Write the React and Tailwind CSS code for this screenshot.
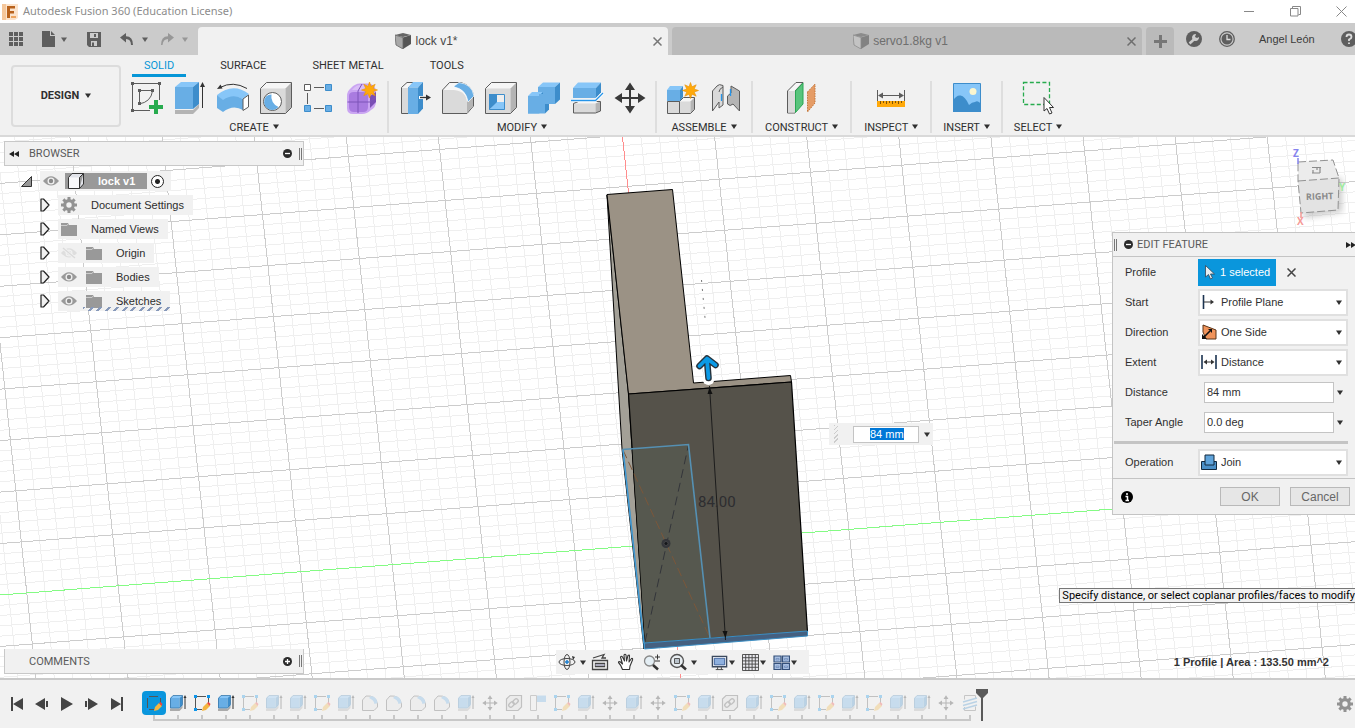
import React, { useEffect, useRef } from "react";

const INK = "#5c5c5c";
const B1 = "#87c6f8";
const B2 = "#68aee5";
const B3 = "#3d8dcb";
const G1 = "#f6f6f6";
const G2 = "#dadada";
const G3 = "#b4b4b4";

function Caret({ className = "" }) {
  return (
    <svg width="6" height="5" viewBox="0 0 6 5" className={"shrink-0 " + className} aria-hidden="true">
      <path d="M0 .5H6L3 5Z" fill="currentColor" />
    </svg>
  );
}

function Pic({ children, size = 32, box = 32, className = "" }) {
  return (
    <svg width={size} height={size} viewBox={`0 0 ${box} ${box}`} fill="none" className={"shrink-0 " + className} aria-hidden="true">
      {children}
    </svg>
  );
}

/* Oblique box: x,y is the front face's top left corner, d the depth. */
function Box({ x, y, w, h, dx, dy, c = [B1, B2, B3], stroke = "none" }) {
  return (
    <g stroke={stroke} strokeLinejoin="round">
      <path d={`M${x} ${y}l${dx} ${-dy}h${w}l${-dx} ${dy}Z`} fill={c[0]} />
      <path d={`M${x} ${y}h${w}v${h}h${-w}Z`} fill={c[1]} />
      <path d={`M${x + w} ${y}l${dx} ${-dy}v${h}l${-dx} ${dy}Z`} fill={c[2]} />
    </g>
  );
}

function Shell({ x, y, w, h, dx, dy }) {
  return (
    <g>
      <Box x={x} y={y} w={w} h={h} dx={dx} dy={dy} c={[G1, G2, G3]} />
      <path d={`M${x} ${y}l${dx} ${-dy}h${w}v${h}l${-dx} ${dy}h${-w}Z`} stroke={INK} strokeLinejoin="round" />
    </g>
  );
}

function Star({ x, y }) {
  const pts = [];
  for (let i = 0; i < 16; i++) {
    const r = i % 2 ? 4 : 8;
    const a = (Math.PI * i) / 8 - Math.PI / 2;
    pts.push(`${(x + r * Math.cos(a)).toFixed(1)},${(y + r * Math.sin(a)).toFixed(1)}`);
  }
  return <polygon points={pts.join(" ")} fill="#ffa90a" stroke="#e8920a" strokeWidth=".6" />;
}

const Move = ({ c = "#3a3a3a" }) => (
  <g fill={c}>
    <path d="M15 7h2v8h8v2h-8v8h-2v-8H7v-2h8Z" />
    <path d="M16 .5l5 7.5H11ZM16 31.5l5-7.5H11ZM.5 16L8 11v10ZM31.5 16L24 11v10Z" />
  </g>
);

const icons = {
  sketch: (
    <>
      <path d="M2.500 1.500H28M1.500 2V28M2 28.500H19M28.500 2V18" stroke={INK} />
      <path d="M8.500 8.500H21M8.500 8.500V22M21.500 9Q20 20 8 22" stroke={INK} />
      <path d="M0 0h3v3h-3ZM27 0h3v3h-3ZM0 27h3v3h-3ZM7 7h3v3h-3ZM20 7h3v3h-3ZM7 20h3v3h-3Z" fill={INK} />
      <path d="M23 18h4v5h5v4h-5v5h-4v-5h-5v-4h5Z" fill="#27ab4e" />
    </>
  ),
  extrude: (
    <>
      <path d="M1 28H19L25 22V26L19 32H1Z" fill="#b4b4b4" />
      <Box x={1} y={5} w={18} h={22} dx={6} dy={5} />
      <path d="M28.500 4V26" stroke="#333" />
      <path d="M28.500 0l2.500 5h-5Z" fill="#333" />
    </>
  ),
  revolve: (
    <>
      <path d="M0 13Q16 0 32 12L26 17Q16 12 6 19Z" fill={B1} />
      <path d="M0 13L6 18Q16 11 26 17V28Q16 22 6 30L0 26Z" fill={B2} />
      <path d="M26 17L31.500 13V25L26 28.500Z" fill="#fff" stroke={INK} />
      <path d="M3 5.500Q16-1.500 30 6.500" stroke="#333" />
      <path d="M0 7l3.500-4.500 2 4Z" fill="#333" />
    </>
  ),
  hole: (
    <>
      <Shell x={0.5} y={6.5} w={25} h={25} dx={6} dy={6} />
      <circle cx="12.500" cy="19.500" r="9" fill="#fff" stroke={INK} />
      <path d="M6 14.500a8 8 0 0 0 12.500 10.500a11 11 0 0 1-7-12.500a8 8 0 0 0-5.500 2Z" fill={B2} />
    </>
  ),
  pattern: (
    <>
      <path d="M11 5.500H21M4.500 11V22M11 26.500H21" stroke={INK} />
      <path d="M1.500 2.500h6v6h-6Z" fill="#fff" stroke={INK} />
      <g fill={B2} stroke={B3}>
        <path d="M22.500 2.500h6v6h-6ZM1.500 23.500h6v6h-6ZM22.500 23.500h6v6h-6Z" />
      </g>
    </>
  ),
  form: (
    <>
      <path d="M1 14Q1 9 5 6Q9 1.500 14 1.500H22Q30 2 30 10V20Q30 25 25 28Q21 32 16 32H7Q1 32 1 26Z" fill="#caa5f2" />
      <path d="M3 14Q3 10 8 10H17Q22 10 22 15V25Q22 30 17 30H8Q3 30 3 25Z" fill="#a97be0" />
      <path d="M6 8Q10 3 14 3H23L19 8Z" fill="#d9bdf7" />
      <path d="M24 14L30 10V20L24 26Z" fill="#7a4fb5" />
      <path d="M1.500 20H24M12 9V31M24 20L30 15M12 9L16 2" stroke="#7d55b8" />
      <Star x={23.5} y={8} />
    </>
  ),
  press: (
    <>
      <path d="M2.500 5.500L8 .5H15L9.500 5.500V31.500H2.500Z" fill={G1} stroke={INK} />
      <path d="M3 6h6v25h-6Z" fill={G2} />
      <Box x={9} y={5.500} w={10} h={26.500} dx={5} dy={5.500} />
      <path d="M20 15.500H28" stroke="#fff" strokeWidth="3" />
      <path d="M21 15.500H29" stroke="#333" strokeWidth="1.400" />
      <path d="M32 15.500l-5-3v6Z" fill="#333" />
    </>
  ),
  fillet: (
    <>
      <path d="M.5 8L7.500 .5H19Q31 4 31.500 15V24L25 31.500H.5Z" fill={G1} stroke={INK} />
      <path d="M1 8H12Q24 9 25 20V31H1Z" fill={G2} />
      <path d="M25 19L31 14.500V24L25 31Z" fill={G3} />
      <path d="M12 4L17 .5Q30 2 32 14L26 20Q24 7 12 5Z" fill={B2} stroke="#fff" strokeWidth=".7" />
    </>
  ),
  shell: (
    <>
      <Shell x={0.5} y={6.5} w={25} h={25} dx={6} dy={6} />
      <path d="M4 12h16v16h-16Z" fill="#eee" />
      <path d="M4 12h8v9l-8 7Z" fill={B3} />
      <path d="M4 28L12 20H20V28Z" fill={B1} />
      <path d="M4.500 12.500h15v15h-15Z" stroke={B3} />
    </>
  ),
  combine: (
    <>
      <Box x={10} y={5} w={17} h={17} dx={5} dy={4.500} />
      <Box x={0} y={14} w={11} h={17.500} dx={4} dy={4} />
      <path d="M0 14H11V12H17V31.500H0Z" fill={B2} />
      <path d="M17 22h4v5.500l-4 4Z" fill={B3} />
    </>
  ),
  split: (
    <>
      <Shell x={2.5} y={21.5} w={22} h={9.500} dx={5} dy={2} />
      <Box x={2} y={6} w={23} h={10} dx={5} dy={5.500} />
      <path d="M0 18.500H24.500L32 11" stroke="#fff" strokeWidth="3" />
      <path d="M0 18.500H24.500L32 11" stroke="#2694e8" strokeWidth="1.300" />
    </>
  ),
  move: <Move />,
  component: (
    <>
      <Shell x={12.5} y={19.5} w={11} h={12} dx={4} dy={4} />
      <path d="M.5 19.500h12v12h-12Z" fill={G2} stroke={INK} />
      <Box x={0} y={8} w={13} h={11} dx={3} dy={4} />
      <Star x={23.5} y={8.5} />
    </>
  ),
  joint: (
    <>
      <path d="M2.500 9L7 4Q9 1.500 13 3.500V23L9 26V20L2.500 29Z" fill={G2} stroke={INK} />
      <path d="M9 10Q9 7 13 5" stroke={INK} />
      <path d="M29.500 9L21 4V11L17.500 14V22Q20 25 23 22L29.500 29Z" fill={G3} stroke={INK} />
      <path d="M11.500 12V19M20.500 7V14" stroke="#2694e8" strokeWidth="1.300" />
    </>
  ),
  construct: (
    <>
      <path d="M1.500 9L10 .5H17L9 9V31H1.500Z" fill={G1} stroke={INK} />
      <path d="M2 9h7v21.500h-7Z" fill={G2} />
      <path d="M9.500 9L17 1V22L9.500 30.500Z" fill="#58c47c" stroke="#2aa653" />
      <path d="M21.500 10L29 2V21L21.500 30Z" fill="#e59c66" stroke="#c4763a" strokeDasharray="1.500 1" />
    </>
  ),
  inspect: (
    <>
      <path d="M2.500 8V19M29.500 8V19M5 13.500H27" stroke={INK} />
      <path d="M3 13.500l5-3v6ZM29 13.500l-5-3v6Z" fill={INK} />
      <path d="M2 19h28v6h-28Z" fill="#ffa90a" />
      <path d="M5.500 19v3M8.500 19v2M11.500 19v3M14.500 19v2M17.500 19v3M20.500 19v2M23.500 19v3M26.500 19v2" stroke="#7d5307" />
    </>
  ),
  insert: (
    <>
      <path d="M2.500 1.500h27v28h-27Z" fill={B1} stroke={B3} />
      <circle cx="22" cy="9.500" r="3.500" fill="#fbf6cf" />
      <path d="M2 19Q5 13 9.500 13.500Q14 14 18 23Q21 20 24 20Q27 18 30 22V30H2Z" fill={B3} />
    </>
  ),
  select: (
    <>
      <path d="M1.500 .5h26v22h-26Z" stroke="#27ab4e" strokeWidth="1.300" strokeDasharray="4 2.300" />
      <path d="M22 15.500V29L25 26.500L27.500 32L30 31L27.500 25.500H31.500Z" fill="#fff" stroke="#333" />
    </>
  ),
};

const groups = [
  { name: "CREATE", pad: "px-1", items: ["sketch", "extrude", "revolve", "hole", "pattern", "form"] },
  { name: "MODIFY", pad: "px-1", items: ["press", "fillet", "shell", "combine", "split", "move"] },
  { name: "ASSEMBLE", pad: "px-1", items: ["component", "joint"] },
  { name: "CONSTRUCT", pad: "px-3", items: ["construct"] },
  { name: "INSPECT", pad: "px-3", items: ["inspect"] },
  { name: "INSERT", pad: "px-[11px]", items: ["insert"] },
  { name: "SELECT", pad: "px-[11px]", items: ["select"] },
];

function TitleBar() {
  return (
    <header className="flex h-[23px] shrink-0 items-center bg-white">
      <svg width="16" height="16" viewBox="0 0 16 16" className="ml-0.5" aria-hidden="true">
        <path d="M0 0h16v14l-3 2H0Z" fill="#fbe3cc" />
        <path d="M0 0h4v16H0Z" fill="#f5c79b" />
        <path d="M5 2h8v2.500H8V7h4v2.500H8V14H5Z" fill="#b8611b" />
        <path d="M9 12h5v2H9Z" fill="#eda45f" />
      </svg>
      <h1 className="ml-[5px] font-['Noto_Sans',sans-serif] text-[11px] text-[#8c8c8c]">Autodesk Fusion 360 (Education License)</h1>
      <div className="ml-auto flex items-center gap-[35px] pr-2 text-[#888]">
        <button aria-label="Minimize"><svg width="11" height="11" viewBox="0 0 11 11" className="block" stroke="currentColor"><path d="M0 5.500H10" /></svg></button>
        <button aria-label="Restore"><svg width="11" height="11" viewBox="0 0 11 11" className="block" fill="none" stroke="currentColor"><path d="M.5 2.500h7.500v7.500h-7.500ZM2.500 2.500V.5h8v8h-2" /></svg></button>
        <button aria-label="Close"><svg width="11" height="11" viewBox="0 0 11 11" className="block" stroke="currentColor"><path d="M.5.5l10 10M10.500.5l-10 10" /></svg></button>
      </div>
    </header>
  );
}

function DocCube({ dim }) {
  return (
    <svg width="16" height="16" viewBox="0 0 16 16" aria-hidden="true" opacity={dim ? 0.55 : 1}>
      <path d="M0 2L8 0L16 2L8 4Z" fill="#666" />
      <path d="M0 2L8 4.500V16L1 12Z" fill={dim ? "#ccc" : "#a8a8a8"} />
      <path d="M8 4.500L16 2V11L8 16Z" fill="#555" />
      <path d="M0 2L8 4.500V16L1 12Z" stroke="#666" strokeWidth=".8" fill="none" />
    </svg>
  );
}

function Cross({ className }) {
  return <svg width="9" height="9" viewBox="0 0 9 9" className={className} stroke="currentColor" strokeWidth="1.500"><path d="M.5.5l8 8M8.500.5l-8 8" /></svg>;
}

function TabBar() {
  return (
    <div className="flex h-8 shrink-0 overflow-hidden bg-[#cbcbcb] text-[#5e5e5e]">
      <div className="flex w-[198px] shrink-0 items-center pl-[9px]">
        <button aria-label="Data panel">
          <svg width="14" height="14" viewBox="0 0 14 14" className="block" fill="currentColor"><path d="M0 0h4v4H0ZM5 0h4v4H5ZM10 0h4v4h-4ZM0 5h4v4H0ZM5 5h4v4H5ZM10 5h4v4h-4ZM0 10h4v4H0ZM5 10h4v4H5ZM10 10h4v4h-4Z" /></svg>
        </button>
        <button aria-label="File" className="ml-[19px] flex items-center gap-[6px]">
          <svg width="13" height="16" viewBox="0 0 13 16" fill="currentColor"><path d="M0 0h8v5h5v11H0ZM9 0l4 4H9Z" /></svg>
          <Caret />
        </button>
        <button aria-label="Save" className="ml-5">
          <svg width="14" height="15" viewBox="0 0 14 15" className="block" fill="currentColor" fillRule="evenodd"><path d="M0 0h14v15H2L0 13ZM3 1v5h8V1ZM4 9v5h6V9ZM7 2h2v3H7ZM5 10.500h2V14H5Z" /></svg>
        </button>
        <button aria-label="Undo" className="ml-[19px] flex items-center gap-2">
          <svg width="14" height="12" viewBox="0 0 14 12" fill="currentColor"><path d="M0 4.500L6 0v3.300Q13 3.500 13 12h-2Q11 6 6 6v3.500Z" /></svg>
          <Caret />
        </button>
        <button aria-label="Redo" className="ml-3 flex items-center gap-2 text-[#979797]">
          <svg width="14" height="12" viewBox="0 0 14 12" fill="currentColor"><path d="M14 4.500L8 0v3.300Q1 3.500 1 12h1.500Q3 6 8 6v3.500Z" /></svg>
          <Caret />
        </button>
      </div>
      <div className="flex flex-1 gap-1 pt-1 text-[12px]">
        <div className="flex flex-1 items-center rounded-t bg-[#f1f1f1] pl-[2px] pr-[6px] text-[#4a4a4a]">
          <a href="#lock" className="flex flex-1 items-center justify-center gap-1"><DocCube />lock v1*</a>
          <button aria-label="Close lock v1" className="text-[#777]"><Cross className="block" /></button>
        </div>
        <div className="flex flex-1 items-center rounded-t bg-[#bababa] pl-[2px] pr-[6px] text-[#6e6e6e]">
          <a href="#servo" className="flex flex-1 items-center justify-center gap-1"><DocCube dim />servo1.8kg v1</a>
          <button aria-label="Close servo1.8kg v1"><Cross className="block" /></button>
        </div>
        <button aria-label="New tab" className="flex w-7 items-center justify-center rounded-t bg-[#bababa]">
          <svg width="13" height="13" viewBox="0 0 13 13" fill="#777"><path d="M5 0h3v5h5v3H8v5H5V8H0V5h5Z" /></svg>
        </button>
      </div>
      <div className="flex w-[181px] shrink-0 items-center pl-3 text-[11px] text-[#3c3c3c]">
        <button aria-label="Extensions">
          <svg width="16" height="16" viewBox="0 0 16 16" className="block"><circle cx="8" cy="8" r="8" fill="#5e5e5e" /><path d="M3.500 12.500L9 7.500" stroke="#ccc" strokeWidth="2.500" /><path d="M13 6A3.500 3.500 0 1 1 10 3L9 6L11 7Z" fill="#ccc" /></svg>
        </button>
        <button aria-label="Job status" className="ml-[17px]">
          <svg width="16" height="16" viewBox="0 0 16 16" className="block" fill="none"><circle cx="8" cy="8" r="7.300" stroke="#5e5e5e" strokeWidth="1.300" /><circle cx="8" cy="8" r="5.500" fill="#5e5e5e" /><path d="M8 4v4.500h3.500" stroke="#ddd" strokeWidth="1.300" /></svg>
        </button>
        <button className="ml-6 whitespace-nowrap">Angel León</button>
        <button aria-label="Help" className="ml-[26px]">
          <svg width="16" height="16" viewBox="0 0 16 16" className="block"><circle cx="8" cy="8" r="8" fill="#5e5e5e" /><path d="M5.500 6Q5.500 3.500 8 3.500T10.500 6Q10.500 7.500 8 8.500V10M8 11.500V13" fill="none" stroke="#ddd" strokeWidth="1.800" /></svg>
        </button>
      </div>
    </div>
  );
}

function Ribbon() {
  return (
    <div className="flex h-[82px] shrink-0 overflow-hidden border-b-2 border-[#d9d9d9] bg-[#f1f1f1] font-[Roboto,sans-serif] text-[11px] text-[#2f2f2f]">
      <button className="ml-[11px] mt-[10px] flex h-[62px] w-[110px] shrink-0 items-center justify-center gap-[6px] rounded border-2 border-[#dcdcdc] pt-px font-bold">
        DESIGN <Caret className="mb-0.5" />
      </button>
      <div className="flex flex-col">
        <nav className="ml-[11px] flex gap-[22px]">
          <a href="#solid" className="flex h-[22px] items-center border-b-[3px] border-[#0696d7] px-3 pt-1 text-[#0696d7]">SOLID</a>
          {["SURFACE", "SHEET METAL", "TOOLS"].map((t) => (
            <a key={t} href={"#" + t.toLowerCase().replace(" ", "-")} className="flex h-[22px] items-center border-b-[3px] border-transparent px-3 pt-1">{t}</a>
          ))}
        </nav>
        <div className="mt-1 flex h-[52px]">
          {groups.map((g, i) => (
            <section key={g.name} className={"flex flex-col items-center border-r-2 " + g.pad + (i === groups.length - 1 ? " border-transparent" : " border-[#dedede]")}>
              <div className="flex">
                {g.items.map((n) => (
                  <button key={n} aria-label={n} className="flex h-[35px] w-[43px] justify-center pt-px"><Pic className="overflow-visible">{icons[n]}</Pic></button>
                ))}
              </div>
              <button className="mt-1 flex items-center gap-1 whitespace-nowrap leading-[16px]">{g.name} <Caret className="mb-1" /></button>
            </section>
          ))}
        </div>
      </div>
    </div>
  );
}

function Scene() {
  const v = [];
  const h = [];
  for (let k = -50; k <= 140; k++) {
    const x = 622.4 + 18.42 * k;
    v.push({ k, x1: x - 0.1075 * 136, x2: x + 0.1075 * 1264 });
  }
  for (let k = -60; k <= 100; k++) {
    const y = 595 + 10.29 * k;
    h.push({ k, y1: y, y2: y - 0.0773 * 2600 });
  }
  const line = (l, major) => (l.k % 5 === 0) === major;
  return (
    <svg width="100%" height="100%" className="absolute inset-0 block" aria-label="Model view" role="img">
      <g transform="translate(0,-137)">
        {[false, true].map((major) => (
          <g key={String(major)} stroke={major ? "#cccccc" : "#efefef"} shapeRendering="crispEdges">
            {v.filter((l) => line(l, major)).map((l) => <line key={"v" + l.k} x1={l.x1} y1="0" x2={l.x2} y2="1400" />)}
            {h.filter((l) => line(l, major)).map((l) => <line key={"h" + l.k} x1="0" y1={l.y1} x2="2600" y2={l.y2} />)}
          </g>
        ))}
        <path d="M622.400 136L680.500 678" stroke="#ff8d8d" shapeRendering="crispEdges" />
        <path d="M0 595L2600 394" stroke="#84fb84" shapeRendering="crispEdges" />

        <path d="M607 195L628.500 394L645 643L644 649L622 449Z" fill="#a3a097" stroke="#000" strokeLinejoin="round" />
        <path d="M607 194.500L672.500 189.500L693.500 383L790.500 375.500L791.500 382L628.500 394Z" fill="#9b9285" stroke="#000" strokeLinejoin="round" />
        <path d="M628.500 394L791.500 382L807.500 632L645 643Z" fill="#55524a" stroke="#000" strokeWidth="1.200" strokeLinejoin="round" />
        <path d="M632.500 450L688.500 445L710 638L645 643Z" fill="#56584f" />
        <path d="M644.500 643L807.500 631V636L644.500 649Z" fill="#456080" stroke="#3c8fc4" />
        <path d="M645 642L688.500 445" stroke="#33353a" strokeDasharray="9 5" />
        <path d="M623 450L710 638" stroke="#7b573a" strokeDasharray="9 4" />
        <path d="M644 643L623 449.500L688.500 444.500L710 638" fill="none" stroke="#5590b3" strokeWidth="1.600" />
        <path d="M623 450L644.500 649" stroke="#3f9ad6" strokeWidth="1.200" />
        <circle cx="666" cy="543.500" r="4.500" fill="#34353a" />
        <circle cx="666" cy="543.500" r="2" fill="#15161a" stroke="#555" strokeWidth=".6" />
        <path d="M709.500 386L725.500 640" stroke="#1c1c1c" />
        <path d="M709.500 387l3 7h-5ZM725.500 638l2-7h-5Z" fill="#111" />
        <text x="698" y="507" fontFamily="Roboto, sans-serif" fontSize="15" fill="#2d2d30">84.00</text>
        <path d="M701.500 280L705 318" stroke="#555" strokeWidth=".8" strokeDasharray="2 7" />
        <circle cx="708.500" cy="379" r="6" fill="#fff" />
        <g fill="none" strokeLinecap="round" strokeLinejoin="round">
          <path d="M699.500 366L707 358.500L715.500 365M707 360L708.500 378" stroke="#26323c" strokeWidth="6.600" />
          <path d="M699.500 366L707 358.500L715.500 365M707 360L708.500 378" stroke="#0b9ae6" strokeWidth="3.800" />
        </g>
      </g>
    </svg>
  );
}

const Eye = ({ off }) => (
  <svg width="16" height="16" viewBox="0 0 16 16" className="shrink-0" aria-hidden="true" fill="none">
    <path d="M0 8Q8-1.500 16 8Q8 17 0 8Z" fill={off ? "#dedede" : "#9a9a9a"} />
    <circle cx="8" cy="8" r="3.500" fill="#f1f1f1" />
    <circle cx="8" cy="8" r="2.200" fill={off ? "#dedede" : "#8a8a8a"} />
    {off && <path d="M2 3L14 13" stroke="#f1f1f1" strokeWidth="3" />}
    {off && <path d="M2 3L14 13" stroke="#dadada" strokeWidth="1.300" />}
  </svg>
);

const Folder = () => (
  <svg width="16" height="14" viewBox="0 0 16 14" className="shrink-0" aria-hidden="true"><path d="M0 1h7l1 2h8v11H0Z" fill="#999" /><path d="M0 3.500h6l1-1.500" stroke="#ccc" fill="none" /></svg>
);

function Gear({ size = 16 }) {
  return (
    <svg width={size} height={size} viewBox="0 0 16 16" className="shrink-0" aria-hidden="true">
      <circle cx="8" cy="8" r="4.300" fill="none" stroke="#929292" strokeWidth="3.200" />
      {[0, 45, 90, 135].map((a) => (
        <path key={a} d="M8 0v3M8 13v3" stroke="#929292" strokeWidth="3" transform={`rotate(${a} 8 8)`} />
      ))}
    </svg>
  );
}

const Grip = () => <span className="ml-1 h-3 w-[3px] border-x border-[#777]" />;

const RoundSign = ({ plus }) => (
  <svg width="9" height="9" viewBox="0 0 9 9" className="block"><circle cx="4.500" cy="4.500" r="4.500" fill="#2b2b2b" /><path d={plus ? "M2 4.500h5M4.500 2v5" : "M2 4.500h5"} stroke="#fff" strokeWidth="1.300" /></svg>
);

const tree = [
  { name: "Document Settings", gear: true },
  { name: "Named Views", folder: true },
  { name: "Origin", eye: "off", folder: true },
  { name: "Bodies", eye: "on", folder: true },
  { name: "Sketches", eye: "on", folder: true, hatch: true },
];

function Browser() {
  return (
    <aside className="absolute left-1 top-1 w-[300px] text-[11px] text-[#2d2d2d]">
      <div className="flex h-[25px] items-center border border-[#c8c8c8] bg-[#f1f1f1] pl-1 pr-px font-[Roboto,sans-serif] text-[#5a5a5a]">
        <button aria-label="Collapse browser"><svg width="10" height="6" viewBox="0 0 10 6" className="block" fill="#222"><path d="M5 0v6L0 3ZM10 0v6L5 3Z" /></svg></button>
        <h2 className="ml-[10px] flex-1 pt-0.5">BROWSER</h2>
        <button aria-label="Hide all" className="mr-[3px]"><RoundSign /></button>
        <Grip />
      </div>
      <ul>
        <li className="mt-[5px] flex h-5 items-center pl-[17px]">
          <svg width="11" height="11" viewBox="0 0 11 11" className="mr-2" aria-hidden="true"><path d="M.5 10.500H10.500V.5Z" fill="#999" stroke="#333" /></svg>
          <div className="flex h-5 items-center bg-[#f1f1f1] pl-[3px] pr-[7px]">
            <Eye />
            <span className="ml-[6px] flex h-4 items-center bg-[#999] pl-[3px] pr-3 font-bold text-white">
              <svg width="16" height="16" viewBox="0 0 16 16" className="mr-[14px]" aria-hidden="true"><path d="M.5 4.500L4 .5H15.500L11.500 4.500V15.500H.5ZM15.500 .5V11L11.500 15.500" fill="#e2e4ea" stroke="#333" strokeLinejoin="round" /><path d="M1 4.500h10v10.500h-10Z" fill="#f8f8fa" /></svg>
              lock v1
            </span>
            <input type="radio" name="active" defaultChecked aria-label="Activate lock v1" className="ml-1 h-[13px] w-[13px] appearance-none rounded-full border border-[#222] bg-[radial-gradient(circle,#222_0_2px,#fff_3px)]" />
          </div>
        </li>
        {tree.map((r) => (
          <li key={r.name} className="mt-1 flex h-5 items-center pl-9">
            <button aria-label={"Expand " + r.name} className="mr-2"><svg width="10" height="14" viewBox="0 0 10 14" className="block"><path d="M1 1L3.500 1L9 7L3.500 13H1Z" fill="#f1f1f1" stroke="#222" strokeWidth="1.200" strokeLinejoin="round" /></svg></button>
            <div className="relative flex h-5 items-center gap-[9px] bg-[#f1f1f1] pl-[3px] pr-[9px]">
              {r.eye && <Eye off={r.eye === "off"} />}
              {r.gear && <Gear />}
              {r.folder && <Folder />}
              <span className="pl-[5px]">{r.name}</span>
              {r.hatch && <span className="absolute bottom-0 left-[25px] right-0 h-1 bg-[repeating-linear-gradient(135deg,#8799ba_0_2px,transparent_2px_6px)]" />}
            </div>
          </li>
        ))}
      </ul>
    </aside>
  );
}

function Comments() {
  return (
    <div className="absolute bottom-1 left-1 flex h-[25px] w-[300px] items-center border border-t-0 border-[#c8c8c8] bg-[#f1f1f1] pl-6 pr-px font-[Roboto,sans-serif] text-[11px] text-[#5a5a5a]">
      <h2 className="flex-1 pt-0.5">COMMENTS</h2>
      <button aria-label="Add comment" className="mr-[3px]"><RoundSign plus /></button>
      <Grip />
    </div>
  );
}

function ViewCube() {
  return (
    <svg width="60" height="84" viewBox="1288 144 60 84" className="absolute right-[7px] top-[7px]" role="img" aria-label="View cube">
      <defs><filter id="soft"><feGaussianBlur stdDeviation="3" /></filter></defs>
      <path d="M1304 180L1342 178V212L1304 218Z" fill="#999" opacity=".5" filter="url(#soft)" />
      <path d="M1298 162L1333 160L1339 178L1298 181Z" fill="#ececec" />
      <path d="M1298 181L1339 178L1338 210L1301 213Z" fill="#e3e3e3" />
      <path d="M1298 162L1333 160L1339 178L1338 210L1301 213L1298 181ZM1298 181L1339 178" fill="none" stroke="#929292" strokeDasharray="8 3" />
      <g fontFamily="'Open Sans', sans-serif" fontWeight="bold">
        <text x="1306" y="200" fontSize="9" fill="#8a8a8a" transform="rotate(-2 1306 200)">RIGHT</text>
        <text x="1293" y="157" fontSize="10" fill="#8583ee">Z</text>
        <text x="1339" y="191" fontSize="10" fill="#a0eba0">Y</text>
        <text x="1297" y="225" fontSize="10" fill="#f59a96">X</text>
      </g>
      <path d="M1298 158V164" stroke="#8583ee" strokeWidth="1.500" />
      <path d="M1301 212V218" stroke="#f59a96" strokeWidth="1.500" />
      <path d="M1312 167.500h9M1320 167v6M1312 173h8M1313 170v3M1317 168v2" stroke="#8a8a8a" fill="none" strokeWidth="1.200" />
    </svg>
  );
}

function FloatingValue() {
  const ref = useRef(null);
  useEffect(() => {
    ref.current.focus({ preventScroll: true });
    ref.current.select();
  }, []);
  return (
    <div className="absolute left-[829px] top-[286px] flex h-[22px] items-center bg-[#f1f1f1] pl-[5px] pr-[3px]">
      <span className="mr-[15px] h-[18px] w-1 bg-[repeating-linear-gradient(135deg,#ccc_0_1px,transparent_1px_3px)]" />
      <input ref={ref} aria-label="Distance value" defaultValue="84 mm" className="h-[17px] w-[66px] border border-[#c4c4c4] bg-white pl-4 text-[11px] outline-none selection:bg-[#0078d7] selection:text-white" />
      <button aria-label="Distance options" className="ml-[5px] text-[#333]"><Caret /></button>
    </div>
  );
}

const fieldIcons = {
  start: <><path d="M2.500 1V15" stroke="#1b3350" strokeWidth="1.600" /><path d="M3 8H11" stroke="#333" /><path d="M13 8L9.500 5.500v5Z" fill="#333" /></>,
  direction: <><path d="M2 1L15 6V15H5L2 8Z" fill="#f0935a" stroke="#5a3418" /><path d="M2 14L9 7" stroke="#111" strokeWidth="1.600" /><path d="M1 15v-5l5 5ZM11 5v4l-4-4Z" fill="#111" /></>,
  extent: <><path d="M1 1V15M15 1V15" stroke="#1b3350" strokeWidth="1.600" /><path d="M4 8H12" stroke="#333" /><path d="M2.500 8l3.500-2.500v5ZM13.500 8l-3.500-2.500v5Z" fill="#333" /></>,
  join: <><path d="M.5 7.500h15v8H.5Z" fill="#4a8fc7" stroke="#13293d" /><path d="M4 1h9v10H4Z" fill="#5fa3da" stroke="#13293d" /></>,
};

function Pick({ label, id, icon, value, others }) {
  return (
    <div className="flex h-[30px] items-center">
      <label htmlFor={id} className="w-[73px]">{label}</label>
      <div className="flex h-[27px] w-[150px] items-center border-2 border-[#e0e0e0] bg-white pl-px pr-1">
        <Pic size={16} box={16}>{fieldIcons[icon]}</Pic>
        <select id={id} defaultValue={value} className="h-full min-w-0 flex-1 appearance-none bg-transparent pl-1 outline-none">
          {[value, ...others].map((o) => <option key={o}>{o}</option>)}
        </select>
        <Caret className="pointer-events-none" />
      </div>
    </div>
  );
}

function Num({ label, id, value }) {
  return (
    <div className="flex h-[30px] items-center">
      <label htmlFor={id} className="w-[79px]">{label}</label>
      <input id={id} defaultValue={value} className="h-[21px] w-[130px] border border-[#c4c4c4] bg-white px-[2px] outline-none" />
      <button aria-label={label + " options"} className="ml-[3px]"><Caret /></button>
    </div>
  );
}

function EditFeature() {
  return (
    <form className="absolute right-0 top-[95px] w-[243px] border-y border-l border-[#c4c4c4] bg-[#f1f1f1] text-[11px] text-[#303030]" onSubmit={(e) => e.preventDefault()}>
      <div className="flex h-[24px] items-center border-b border-[#c4c4c4] font-[Roboto,sans-serif] text-[#5a5a5a]">
        <span className="ml-px h-3 w-[3px] border-x border-[#777]" />
        <button type="button" aria-label="Collapse" className="ml-[7px]"><RoundSign /></button>
        <h2 className="ml-1 flex-1 pt-0.5">EDIT FEATURE</h2>
        <button type="button" aria-label="Expand"><svg width="9" height="6" viewBox="0 0 9 6" className="block" fill="#222"><path d="M0 0v6L5 3ZM5 0v6L10 3Z" /></svg></button>
      </div>
      <div className="pl-3">
        <div className="flex h-[30px] items-center">
          <span className="w-[73px]">Profile</span>
          <button type="button" className="flex h-[27px] w-[78px] items-center gap-[5px] bg-[#0a96dc] pl-[7px] text-white">
            <svg width="10" height="15" viewBox="0 0 10 15"><path d="M.5.5V12L3.500 9.500L5.500 14L7.500 13L5.500 9H9.500Z" fill="#e9eef2" stroke="#345" strokeWidth=".8" /></svg>
            <span>1 selected</span>
          </button>
          <button type="button" aria-label="Clear selection" className="ml-[11px] text-[#444]"><Cross className="block" /></button>
        </div>
        <Pick label="Start" id="start" icon="start" value="Profile Plane" others={["Offset Plane", "Object"]} />
        <Pick label="Direction" id="direction" icon="direction" value="One Side" others={["Two Sides", "Symmetric"]} />
        <Pick label="Extent" id="extent" icon="extent" value="Distance" others={["To Object", "All"]} />
        <Num label="Distance" id="distance" value="84 mm" />
        <Num label="Taper Angle" id="taper" value="0.0 deg" />
      </div>
      <hr className="ml-px mr-[7px] mt-1 border-t-[3px] border-[#c4c4c4]" />
      <div className="border-b border-[#c4c4c4] pb-px pl-3 pt-[3px]">
        <Pick label="Operation" id="operation" icon="join" value="Join" others={["Cut", "Intersect"]} />
      </div>
      <div className="flex h-[35px] items-center pl-2 text-[12px] text-[#666]">
        <button type="button" aria-label="Information"><svg width="12" height="12" viewBox="0 0 12 12" className="block"><circle cx="6" cy="6" r="6" fill="#000" /><path d="M6 2v2M4.500 5.500H6.500V9.500M4.500 9.500H8" stroke="#fff" strokeWidth="1.500" fill="none" /></svg></button>
        <button type="submit" className="ml-auto mr-[10px] h-[19px] w-[60px] border border-[#b9b9b9] bg-[#e6e6e6] leading-none">OK</button>
        <button type="button" className="mr-[5px] h-[19px] w-[60px] border border-[#b9b9b9] bg-[#e6e6e6] leading-none">Cancel</button>
      </div>
    </form>
  );
}

function NavBar() {
  return (
    <div className="absolute bottom-1 left-[556px] flex h-6 w-[253px] items-center bg-[#f1f1f1] pl-[2px] text-[#333]">
      <button aria-label="Orbit" className="flex items-center gap-1">
        <Pic size={18} box={18}><ellipse cx="9" cy="9" rx="8" ry="3.500" stroke="#444" /><ellipse cx="9" cy="9" rx="3" ry="7.500" stroke="#444" /><path d="M9 7v4M7 9h4" stroke="#1b7fd0" strokeWidth="1.500" /><path d="M14 3l1 4 2-3Z" fill="#333" /></Pic>
        <Caret />
      </button>
      <button aria-label="Look at" className="ml-[5px]">
        <Pic size={18} box={18}><path d="M1.500 7.500h15v9h-15ZM4.500 10.500h9v3h-9Z" stroke="#444" strokeWidth="1.300" /><path d="M4.500 11h9v2h-9Z" fill="#aab" /><path d="M2 5L13 1.500 11 5H15" stroke="#444" strokeWidth="1.300" /></Pic>
      </button>
      <button aria-label="Pan" className="ml-2">
        <Pic size={18} box={18}><path d="M5.500 16.500Q4 12 1.500 9.500Q1.500 8 3.500 9L5.500 11L3.500 4Q4.500 2.500 5.500 4L7.500 8L7 2Q8 .5 9 2L9.500 8L11 2.500Q12.500 1.500 12.500 3L12 9L14.500 5.500Q16 5 15.500 7L13 13L12.500 16.500Z" fill="#fff" stroke="#333" strokeWidth="1.100" strokeLinejoin="round" /></Pic>
      </button>
      <button aria-label="Zoom" className="ml-2">
        <Pic size={18} box={18}><circle cx="6.500" cy="8" r="5" fill="#e4eef4" stroke="#888" strokeWidth="1.300" /><path d="M10 12L15 16.500" stroke="#333" strokeWidth="2.500" /><path d="M12 4h5M14.500 1.500v5M12 8h5" stroke="#333" /></Pic>
      </button>
      <button aria-label="Fit" className="ml-2 flex items-center gap-1">
        <Pic size={18} box={18}><circle cx="8" cy="8" r="6.500" fill="#e8eef2" stroke="#555" strokeWidth="1.400" /><path d="M5.500 5.500h5v5h-5Z" fill="#b9c3cc" stroke="#555" /><path d="M12 12L17 16.500" stroke="#333" strokeWidth="2.500" /></Pic>
        <Caret />
      </button>
      <button aria-label="Display settings" className="ml-[14px] flex items-center gap-px">
        <Pic size={17} box={18}><path d="M1.500 2.500h15v11h-15Z" fill="#fff" stroke="#3c4a5e" strokeWidth="1.500" /><path d="M3.500 4.500h11v7h-11Z" fill="#8eb0de" stroke="#3c5f9a" /><path d="M7 14v2.500M11 14v2.500M5 16.500h8" stroke="#444" /></Pic>
        <Caret />
      </button>
      <button aria-label="Grid and snaps" className="ml-[7px] flex items-center gap-px">
        <Pic size={17} box={17}><path d="M1 1h15v15H1Z" fill="#e9e9ee" /><path d="M.5 .5h16v16H.5ZM.5 3.700H16.500M.5 6.900H16.500M.5 10.100H16.500M.5 13.300H16.500M3.700 .5V16.500M6.900 .5V16.500M10.100 .5V16.500M13.300 .5V16.500" stroke="#444" strokeWidth=".9" /></Pic>
        <Caret />
      </button>
      <button aria-label="Viewports" className="ml-[7px] flex items-center gap-px">
        <Pic size={17} box={17}><path d="M1 2h7v6H1ZM9.500 2h7v6h-7ZM1 9.500h7v6H1ZM9.500 9.500h7v6h-7Z" fill="#a9c0e2" stroke="#34507a" strokeWidth="1.200" /><path d="M3 4.500h3v1.500H3ZM11.500 4.500h3v1.500h-3ZM3 12h3v1.500H3ZM11.500 12h3v1.500h-3Z" stroke="#6a88b8" strokeWidth=".7" /></Pic>
        <Caret />
      </button>
    </div>
  );
}

const timelineIcons = {
  sk: <><path d="M3 1.500h9M1.500 3v10M14.500 3v5M3 14.500h5" stroke="#555" /><path d="M0 0h3v3H0ZM13 0h3v3h-3ZM0 13h3v3H0Z" fill="#0d95ea" /><path d="M8 16l1-4 4-4 3 3-4 4Z" fill="#f3b53f" /><path d="M13 8l1.500-1 2 2-1 2Z" fill="#f0433a" /></>,
  ext: <><path d="M0 13.500h9.500l3-3v2.500l-3 3H0Z" fill="#aaa" /><Box x={0} y={3} w={9.5} h={10} dx={3} dy={2.500} /><path d="M.5 3.500L3 .5h9.500v9l-3 3.500H.5Z" stroke="#3a78ab" strokeWidth=".8" /><path d="M15 2v12" stroke="#333" /><path d="M15 0l1.500 3h-3Z" fill="#333" /></>,
  fil: <><path d="M.5 5L4 1Q14 0 15.500 9V12L12 15.500H.5Z" fill="#e6e6e6" stroke="#555" strokeLinejoin="round" /><path d="M7 3L9 1Q15 2 15.500 8L12.500 9Q12 5 7 3Z" fill={B2} /></>,
  mov: <g transform="scale(.5)"><Move c="#333" /></g>,
  lnk: <><path d="M.5 4L4 .5H15.500V12L12 15.500H.5Z" fill="#e0e0e0" stroke="#555" strokeWidth="1.200" /><g stroke="#555" strokeWidth="1.400"><rect x="2.500" y="7.500" width="6" height="4" rx="2" transform="rotate(-45 5.500 9.500)" /><rect x="6.500" y="4.500" width="6" height="4" rx="2" transform="rotate(-45 9.500 6.500)" /></g></>,
  cmp: <><path d="M.5 .5h6v15h-6Z" stroke="#777" /><path d="M7 .5h9v6.500H7Z" fill={B2} /></>,
  spl: <><path d="M2.500 .5h11v3M2.500 .5v4M2.500 12v3.500h11v-4" stroke="#666" /><path d="M1 7l14-4M1 10.500l14-4M1 14l14-4" stroke={B3} strokeWidth="1.500" /></>,
};

const steps = "sk ext sk ext sk ext ext sk ext fil fil fil fil ext mov lnk cmp sk ext mov ext mov sk ext lnk ext sk ext sk ext sk ext ext mov spl".split(" ");

const players = [
  ["Go to start", "M1 0h2v14H1ZM13 1v12L3 7Z"],
  ["Step back", "M10 1v12L0 7ZM11 4h2v6h-2Z"],
  ["Play", "M1 0L13 7L1 14Z"],
  ["Step forward", "M0 4h2v6H0ZM3 1v12L13 7Z"],
  ["Go to end", "M1 1v12L11 7ZM11 0h2v14h-2Z"],
];

function Timeline() {
  return (
    <footer className="flex h-[50px] shrink-0 items-start overflow-hidden border-t-2 border-[#cacaca] bg-[#f1f1f1]">
      <div className="ml-[10px] mt-[17px] flex gap-[11px] text-[#444]">
        {players.map(([n, d]) => (
          <button key={n} aria-label={n}><svg width="14" height="14" viewBox="0 0 14 14" className="block" fill="currentColor"><path d={d} /></svg></button>
        ))}
      </div>
      <ol className="ml-[18px] mt-[11px] flex">
        {steps.map((s, i) => (
          <li key={i} className="flex w-6 flex-col items-center">
            <button aria-label={"Step " + (i + 1)} className={"flex h-6 w-6 items-center justify-center rounded-sm " + (i === 0 ? "bg-[#0a96dc]" : "")}>
              <Pic size={16} box={16} className={i > 3 ? "overflow-visible opacity-30" : "overflow-visible"}>{timelineIcons[s]}</Pic>
            </button>
            <span className="h-1 w-0.5 bg-[#c8c8c8]" />
            <span className={"h-0.5 bg-[#c8c8c8] " + (i === 0 ? "w-[13px] self-end" : i === steps.length - 1 ? "w-[13px] self-start" : "w-full")} />
          </li>
        ))}
      </ol>
      <svg width="12" height="32" viewBox="0 0 12 32" className="-ml-[6px] mt-[9px] shrink-0" aria-label="Timeline marker" role="img"><path d="M0 0h12v4L7 9V32H5V9L0 4Z" fill="#5a5a5a" /></svg>
      <button aria-label="Timeline settings" className="ml-auto mr-[2px] mt-4"><Gear /></button>
    </footer>
  );
}

export default function App() {
  return (
    <div className="flex h-screen flex-col overflow-hidden bg-white font-['Liberation_Sans',Arial,sans-serif]">
      <TitleBar />
      <TabBar />
      <Ribbon />
      <main className="relative min-h-0 flex-1 overflow-hidden bg-white">
        <Scene />
        <Browser />
        <Comments />
        <ViewCube />
        <FloatingValue />
        <EditFeature />
        <NavBar />
        <p className="absolute bottom-[75px] right-0 whitespace-nowrap border border-r-0 border-[#777] bg-[#f2f2f2] pl-0.5 font-[Roboto,sans-serif] text-[11px] leading-[13px] text-black">Specify distance, or select coplanar profiles/faces to modify</p>
        <p className="absolute bottom-2 right-[26px] text-[11px] font-bold leading-4 text-[#333]">1 Profile | Area : 133.50 mm^2</p>
      </main>
      <Timeline />
    </div>
  );
}
